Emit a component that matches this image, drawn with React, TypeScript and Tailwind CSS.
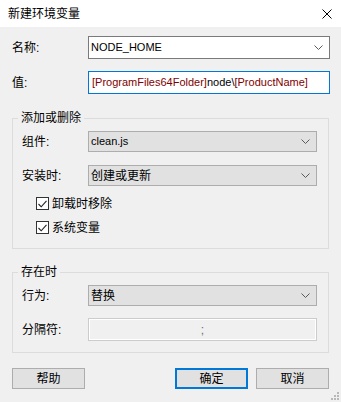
import React from "react";

const font = { fontFamily: '"Liberation Sans", "Noto Sans CJK SC", "Microsoft YaHei", sans-serif' };

function Chevron() {
  return (
    <svg width="9" height="5" viewBox="0 0 9 5" className="shrink-0">
      <path d="M0.5 0.5 L4.5 4.5 L8.5 0.5" fill="none" stroke="#5a5a5a" strokeWidth="1" />
    </svg>
  );
}

function Combo({
  value,
  editable,
  latin,
  h = "h-[21px]",
}: {
  value: string;
  editable?: boolean;
  latin?: boolean;
  h?: string;
}) {
  return (
    <div
      className={`${h} flex flex-1 items-center justify-between pl-[2px] pr-[6px] ${
        editable ? "border border-[#7a7a7a] bg-white" : "border border-[#adadad] bg-[#e1e1e1]"
      }`}
    >
      <span className={latin ? "text-[11px] leading-none" : "leading-none"}>{value}</span>
      <Chevron />
    </div>
  );
}

function Check({ label }: { label: string }) {
  return (
    <div className="flex h-[13px] items-center gap-[3px]">
      <div className="flex h-[13px] w-[13px] items-center justify-center border border-[#333] bg-white">
        <svg width="9" height="8" viewBox="0 0 9 8">
          <path d="M0.5 4 L3.2 6.8 L8.5 0.8" fill="none" stroke="#222" strokeWidth="1.1" />
        </svg>
      </div>
      <span className="leading-none">{label}</span>
    </div>
  );
}

function Btn({ label, def }: { label: string; def?: boolean }) {
  return (
    <div
      className={`flex h-[21px] w-[73px] items-center justify-center bg-[#e1e1e1] ${
        def ? "border-2 border-[#0078d7]" : "border border-[#adadad]"
      }`}
    >
      {label}
    </div>
  );
}

export default function App() {
  return (
    <div className="relative flex h-[402px] w-[341px] flex-col text-[12px] text-black" style={font}>
      <div className="flex h-[27px] items-center justify-between bg-white pl-[8px] pr-[9px]">
        <span className="text-[12px] leading-none">新建环境变量</span>
        <svg width="10" height="10" viewBox="0 0 10 10">
          <path d="M0.5 0.5 L9.5 9.5 M9.5 0.5 L0.5 9.5" stroke="#000" strokeWidth="1" />
        </svg>
      </div>

      <div className="flex flex-1 flex-col bg-[#f0f0f0]">
        <div className="mt-[9px] flex items-center pr-[11px]">
          <span className="w-[88px] pl-[12px]">名称:</span>
          <Combo value="NODE_HOME" editable latin h="h-[23px]" />
        </div>
        <div className="mt-[12px] flex items-center pr-[11px]">
          <span className="w-[88px] pl-[12px]">值:</span>
          <div className="flex h-[23px] flex-1 items-center border border-[#0078d7] bg-white pl-[3px] text-[11px]">
            <span className="text-[#800000]">[ProgramFiles64Folder]</span>
            <span>node\</span>
            <span className="text-[#800000]">[ProductName]</span>
          </div>
        </div>

        <fieldset className="mx-[12px] mt-[16px] h-[139px] border border-[#dcdcdc]">
          <legend className="ml-[5px] px-[3px] leading-[16px]">添加或删除</legend>
          <div className="mt-[5px] flex flex-col pr-[11px]">
            <div className="flex items-center">
              <span className="w-[75px] pl-[9px]">组件:</span>
              <Combo value="clean.js" latin />
            </div>
            <div className="mt-[13px] flex items-center">
              <span className="w-[75px] pl-[9px]">安装时:</span>
              <Combo value="创建或更新" />
            </div>
            <div className="mt-[11px] flex flex-col gap-[11px] pl-[23px]">
              <Check label="卸载时移除" />
              <Check label="系统变量" />
            </div>
          </div>
        </fieldset>

        <fieldset className="mx-[12px] mt-[15px] h-[89px] border border-[#dcdcdc]">
          <legend className="ml-[5px] px-[3px] leading-[16px]">存在时</legend>
          <div className="mt-[5px] flex flex-col pr-[11px]">
            <div className="flex items-center">
              <span className="w-[75px] pl-[9px]">行为:</span>
              <Combo value="替换" />
            </div>
            <div className="mt-[12px] flex items-center">
              <span className="w-[75px] pl-[9px]">分隔符:</span>
              <div className="flex h-[23px] flex-1 items-center justify-center border border-[#cccccc] bg-[#f0f0f0] shadow-[inset_0_0_0_1px_#ffffff] text-[#6d6d6d]">
                ;
              </div>
            </div>
          </div>
        </fieldset>

        <div className="mt-[15px] flex items-center px-[12px]">
          <Btn label="帮助" />
          <div className="flex-1" />
          <Btn label="确定" def />
          <div className="w-[8px]" />
          <Btn label="取消" />
        </div>
      </div>

      <svg width="8" height="8" viewBox="0 0 8 8" className="absolute bottom-[2px] right-[2px]">
        <g fill="#b8b8b8">
          <rect x="6" y="0" width="2" height="2" />
          <rect x="3" y="3" width="2" height="2" />
          <rect x="6" y="3" width="2" height="2" />
          <rect x="0" y="6" width="2" height="2" />
          <rect x="3" y="6" width="2" height="2" />
          <rect x="6" y="6" width="2" height="2" />
        </g>
      </svg>
    </div>
  );
}
